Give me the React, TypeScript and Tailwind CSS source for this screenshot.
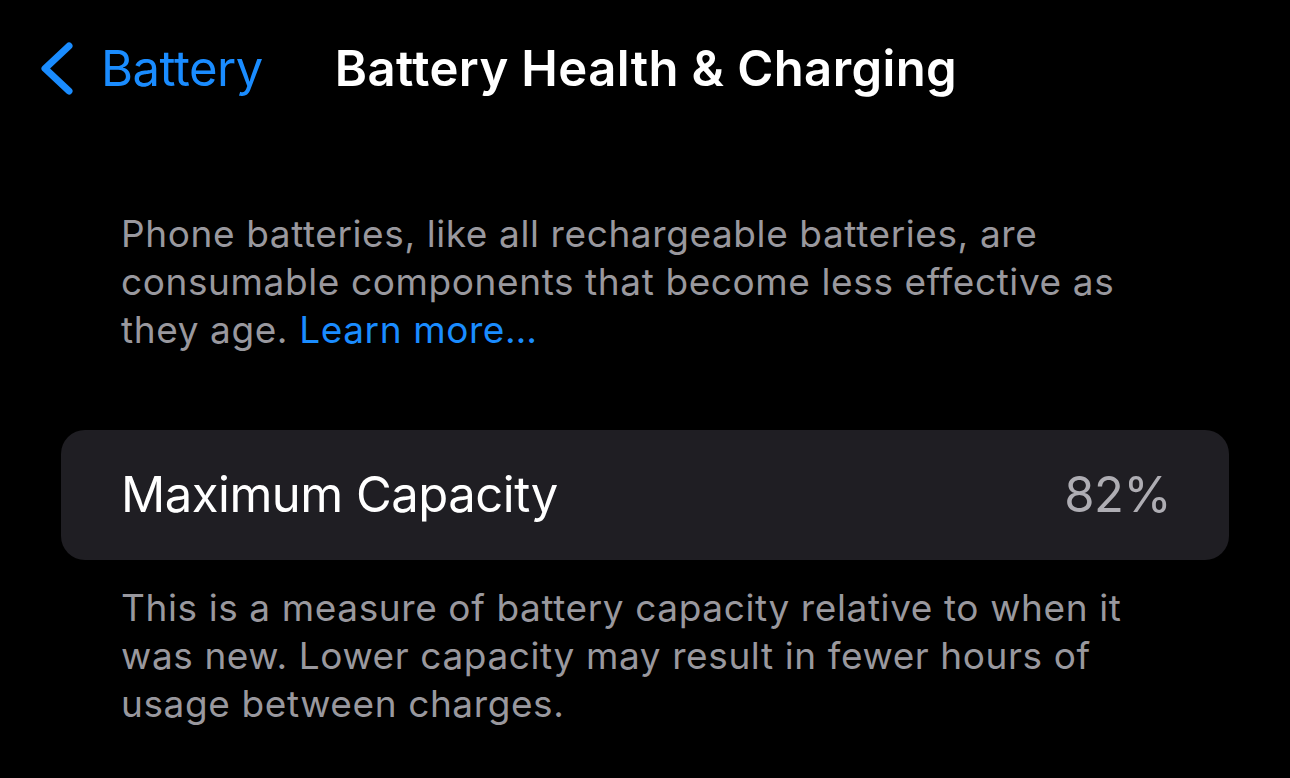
export default function App() {
  return (
    <main
      className="min-h-screen w-full bg-black text-white overflow-hidden"
      style={{ fontFamily: "Inter, 'Noto Sans', sans-serif" }}
    >
      {/* Nav bar */}
      <header className="flex items-center h-[136px] pl-[40px]">
        <button className="flex items-center gap-[28px] text-[#1a8cff]">
          <svg width="33" height="53" viewBox="0 0 33 53" fill="none">
            <path
              d="M29 4 L5 26.5 L29 49"
              stroke="currentColor"
              strokeWidth="7"
              strokeLinecap="round"
              strokeLinejoin="round"
            />
          </svg>
          <span className="text-[49px] leading-none tracking-[-0.5px]">Battery</span>
        </button>
        <h1 className="ml-[72px] text-[49px] font-semibold leading-none tracking-[0.4px]">
          Battery Health &amp; Charging
        </h1>
      </header>

      <section className="pt-[74px] px-[61px]">
        <p className="px-[60px] text-[37px] leading-[48px] tracking-[0.6px] text-[#99989e]">
          Phone batteries, like all rechargeable batteries, are consumable components that become
          less effective as they age. <span className="text-[#1a8cff]">Learn more…</span>
        </p>

        <div className="mt-[76px] h-[130px] w-[1168px] rounded-[24px] bg-[#1f1e23] flex items-center justify-between pl-[60px] pr-[58px]">
          <span className="text-[49px] tracking-[-0.5px]">Maximum Capacity</span>
          <span className="text-[49px] tracking-[-0.5px] text-[#aeadb3]">82%</span>
        </div>

        <p className="mt-[24px] px-[60px] text-[37px] leading-[48px] tracking-[0.6px] text-[#99989e]">
          This is a measure of battery capacity relative to when it was new. Lower capacity may
          result in fewer hours of usage between charges.
        </p>
      </section>
    </main>
  );
}
